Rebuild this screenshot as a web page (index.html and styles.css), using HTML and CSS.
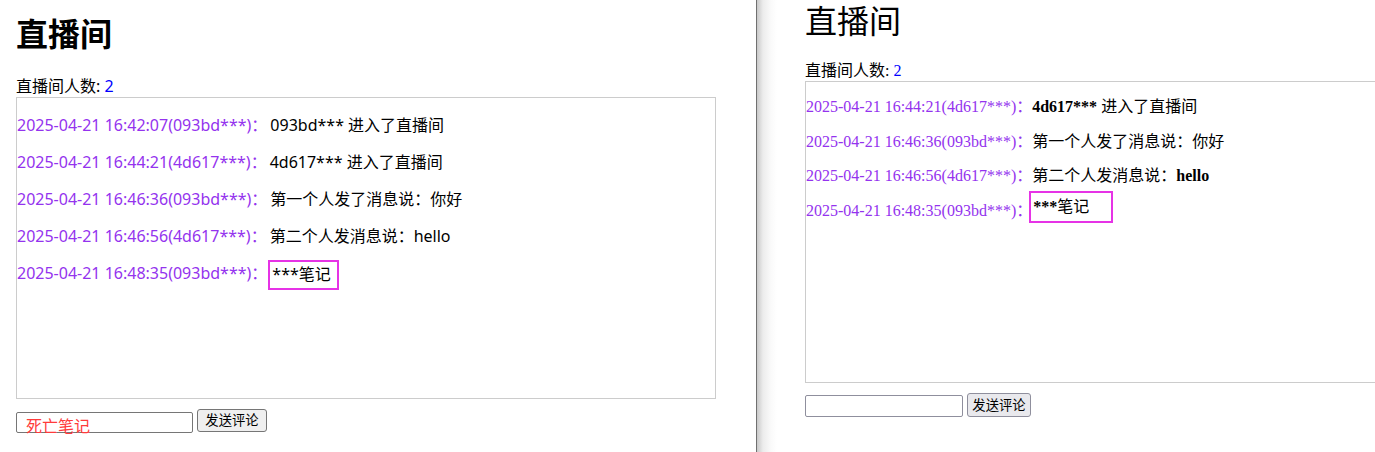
FILE: index.html
```html
<!DOCTYPE html>
<html lang="zh-CN">
<head>
<meta charset="utf-8">
<title>直播间</title>
<link rel="stylesheet" href="styles.css">
</head>
<body>
<div class="desk">
  <section class="pane pane-a">
    <h1 class="title">直播间</h1>
    <div class="count">直播间人数: <span class="num">2</span></div>
    <div class="log">
      <div class="row"><span class="ts">2025-04-21 16:42:07(093bd***)：</span><span class="msg">093bd*** 进入了直播间</span></div>
      <div class="row"><span class="ts">2025-04-21 16:44:21(4d617***)：</span><span class="msg">4d617*** 进入了直播间</span></div>
      <div class="row"><span class="ts">2025-04-21 16:46:36(093bd***)：</span><span class="msg">第一个人发了消息说：你好</span></div>
      <div class="row"><span class="ts">2025-04-21 16:46:56(4d617***)：</span><span class="msg">第二个人发消息说：hello</span></div>
      <div class="row"><span class="ts">2025-04-21 16:48:35(093bd***)：</span><span class="msg mark">***笔记</span></div>
    </div>
    <div class="form">
      <span class="field"><input class="input" type="text"><span class="ph">死亡笔记</span></span>
      <button class="btn" type="button">发送评论</button>
    </div>
  </section>
  <div class="divider"></div>
  <section class="pane pane-b">
    <h1 class="title">直播间</h1>
    <div class="count">直播间人数: <span class="num">2</span></div>
    <div class="log">
      <div class="row"><span class="ts">2025-04-21 16:44:21(4d617***)：</span><span class="msg"><b>4d617***</b> 进入了直播间</span></div>
      <div class="row"><span class="ts">2025-04-21 16:46:36(093bd***)：</span><span class="msg">第一个人发了消息说：你好</span></div>
      <div class="row"><span class="ts">2025-04-21 16:46:56(4d617***)：</span><span class="msg">第二个人发消息说：<b>hello</b></span></div>
      <div class="row"><span class="ts">2025-04-21 16:48:35(093bd***)：</span><span class="msg mark"><b>***</b>笔记</span></div>
    </div>
    <div class="form">
      <span class="field"><input class="input" type="text"></span>
      <button class="btn" type="button">发送评论</button>
    </div>
  </section>
</div>
</body>
</html>
```
FILE: styles.css
```css
html, body {
  margin: 0;
  padding: 0;
  background: #fff;
}

.desk {
  display: flex;
  width: 1375px;
  height: 452px;
  overflow: hidden;
}

.pane {
  flex: none;
  overflow: hidden;
  color: #000;
}

.pane-a {
  width: 756px;
  padding-left: 16px;
  box-sizing: border-box;
  font-family: "Noto Sans", "Noto Sans CJK SC", sans-serif;
  font-size: 16px;
}

.divider {
  flex: none;
  width: 1px;
  background: #707070;
}

.pane-b {
  flex: 1;
  padding-left: 48px;
  font-family: "Liberation Serif", "Noto Sans CJK SC", serif;
  font-size: 16px;
  background: linear-gradient(to right, #c9c9c9 0, #ececec 6px, #fafafa 14px, #fff 20px) no-repeat;
}

.title {
  margin: 0;
  font-size: 32px;
}

.pane-a .title {
  margin: 13px 0 21px;
  line-height: 42px;
  font-weight: bold;
}

.pane-b .title {
  margin: 2px 0 19px;
  line-height: 40px;
  font-weight: normal;
}

.count {
  line-height: 21px;
}

.pane-b .count {
  line-height: 20px;
}

.num {
  color: #0000ff;
}

.log {
  width: 700px;
  height: 302px;
  box-sizing: border-box;
  border: 1px solid #cccccc;
  overflow: hidden;
}

.pane-a .log {
  padding-top: 1px;
}

.pane-b .log {
  width: 720px;
  flex: none;
}

.row {
  display: flex;
  align-items: center;
  margin: 16px 0;
  height: 21px;
  line-height: 21px;
  white-space: nowrap;
}

.pane-b .row {
  height: 18.67px;
  line-height: 18.67px;
}

.ts {
  color: #9433ee;
}

.pane-a .msg {
  margin-left: 3px;
}

.pane-a .mark {
  box-sizing: border-box;
  width: 71px;
  height: 30px;
  line-height: 25px;
  margin-left: 1px;
  margin-top: 3px;
  padding-left: 2px;
  border: 2px solid #e633e6;
  flex: none;
}

.pane-b .msg {
  margin-left: 0;
}

.pane-b .mark {
  box-sizing: border-box;
  width: 84px;
  height: 32px;
  line-height: 27px;
  margin-left: -3px;
  margin-bottom: 8px;
  padding-left: 2px;
  border: 2px solid #e633e6;
  flex: none;
}

.form {
  display: flex;
  align-items: flex-start;
  gap: 4px;
  margin-top: 10px;
}

.field {
  position: relative;
  display: block;
}

.input {
  display: block;
  box-sizing: border-box;
  margin: 3px 0 0;
  width: 177px;
  height: 21px;
  padding: 1px 2px;
  border: 1px solid #767676;
  border-radius: 2px;
  background: #fff;
  font: 13.33px "Noto Sans", sans-serif;
}

.pane-b .input {
  width: 158px;
  height: 22px;
  margin-top: 2px;
  border-color: #8f8f9d;
}

.ph {
  position: absolute;
  left: 10px;
  top: 7px;
  font-size: 16px;
  line-height: 21px;
  color: #ff3b3b;
  white-space: nowrap;
  pointer-events: none;
}

.btn {
  box-sizing: border-box;
  margin: 0;
  width: 70px;
  height: 23px;
  padding: 0 6px;
  border: 1px solid #767676;
  border-radius: 3px;
  background: #efefef;
  color: #000;
  font: 13.33px "Noto Sans", "Noto Sans CJK SC", sans-serif;
  line-height: 19px;
}

.pane-b .btn {
  width: 64px;
  height: 24px;
  border-color: #8f8f9d;
  background: #e9e9ed;
  padding: 0 4px;
}
```
